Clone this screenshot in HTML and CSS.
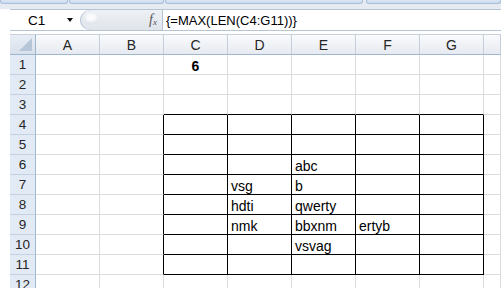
FILE: index.html
```html
<!DOCTYPE html>
<html lang="en">
  <head>
    <meta charset="UTF-8" />
    <title>Array formula – MAX(LEN())</title>
    <link rel="stylesheet" href="styles.css">
  </head>
  <body>
    <div class="ribbon">
      <div class="ribbon_Grp ribbon_Grp-a"></div>
      <div class="ribbon_Grp ribbon_Grp-b"></div>
      <div class="ribbon_Grp ribbon_Grp-c"></div>
      <div class="ribbon_Grp ribbon_Grp-d"></div>
    </div>
    <div class="fbar">
      <div class="fbar_Name">
        <span class="fbar_Ref">C1</span>
        <span class="fbar_Drop"></span>
      </div>
      <div class="fbar_Handle">
        <span class="fbar_Knob"></span>
        <span class="fbar_Fx"><i>f</i><sub>x</sub></span>
      </div>
      <div class="fbar_Formula">{=MAX(LEN(C4:G11))}</div>
    </div>
    <div class="sheet">
      <div class="row row-head">
        <div class="corner"></div>
        <div class="ch">A</div><div class="ch">B</div><div class="ch">C</div><div class="ch">D</div>
        <div class="ch">E</div><div class="ch">F</div><div class="ch">G</div><div class="ch ch-last"></div>
      </div>
      <div class="row">
        <div class="rh">1</div>
        <div class="c"></div><div class="c"></div><div class="c c-ctr c-bold">6</div><div class="c"></div>
        <div class="c"></div><div class="c"></div><div class="c"></div><div class="c"></div>
      </div>
      <div class="row">
        <div class="rh">2</div>
        <div class="c"></div><div class="c"></div><div class="c"></div><div class="c"></div>
        <div class="c"></div><div class="c"></div><div class="c"></div><div class="c"></div>
      </div>
      <div class="row">
        <div class="rh">3</div>
        <div class="c"></div><div class="c"></div><div class="c tp"></div><div class="c tp"></div>
        <div class="c tp"></div><div class="c tp"></div><div class="c tp"></div><div class="c"></div>
      </div>
      <div class="row">
        <div class="rh">4</div>
        <div class="c"></div><div class="c lf"></div><div class="c bx"></div><div class="c bx"></div>
        <div class="c bx"></div><div class="c bx"></div><div class="c bx"></div><div class="c"></div>
      </div>
      <div class="row">
        <div class="rh">5</div>
        <div class="c"></div><div class="c lf"></div><div class="c bx"></div><div class="c bx"></div>
        <div class="c bx"></div><div class="c bx"></div><div class="c bx"></div><div class="c"></div>
      </div>
      <div class="row">
        <div class="rh">6</div>
        <div class="c"></div><div class="c lf"></div><div class="c bx"></div><div class="c bx"></div>
        <div class="c bx">abc</div><div class="c bx"></div><div class="c bx"></div><div class="c"></div>
      </div>
      <div class="row">
        <div class="rh">7</div>
        <div class="c"></div><div class="c lf"></div><div class="c bx"></div><div class="c bx">vsg</div>
        <div class="c bx">b</div><div class="c bx"></div><div class="c bx"></div><div class="c"></div>
      </div>
      <div class="row">
        <div class="rh">8</div>
        <div class="c"></div><div class="c lf"></div><div class="c bx"></div><div class="c bx">hdti</div>
        <div class="c bx">qwerty</div><div class="c bx"></div><div class="c bx"></div><div class="c"></div>
      </div>
      <div class="row">
        <div class="rh">9</div>
        <div class="c"></div><div class="c lf"></div><div class="c bx"></div><div class="c bx">nmk</div>
        <div class="c bx">bbxnm</div><div class="c bx">ertyb</div><div class="c bx"></div><div class="c"></div>
      </div>
      <div class="row">
        <div class="rh">10</div>
        <div class="c"></div><div class="c lf"></div><div class="c bx"></div><div class="c bx"></div>
        <div class="c bx">vsvag</div><div class="c bx"></div><div class="c bx"></div><div class="c"></div>
      </div>
      <div class="row">
        <div class="rh">11</div>
        <div class="c"></div><div class="c lf"></div><div class="c bx"></div><div class="c bx"></div>
        <div class="c bx"></div><div class="c bx"></div><div class="c bx"></div><div class="c"></div>
      </div>
      <div class="row">
        <div class="rh">12</div>
        <div class="c"></div><div class="c"></div><div class="c"></div><div class="c"></div>
        <div class="c"></div><div class="c"></div><div class="c"></div><div class="c"></div>
      </div>
    </div>
  </body>
</html>
```

FILE: styles.css
```css
html {
  box-sizing: border-box;
}

*,
*:before,
*:after {
  box-sizing: inherit;
}

body {
  margin: 0;
  height: 288px;
  overflow: hidden;
  background-color: #fff;
  font-family: 'Liberation Sans', Arial, sans-serif;
  color: #000;
}

/* bottom edge of the ribbon */
.ribbon {
  display: flex;
  height: 9px;
  background-color: #e6ebf2;
}

.ribbon_Grp {
  height: 4px;
  background: linear-gradient(#dce7f5, #c9d9ee);
  border: 1px solid #a9bfdb;
  border-top: 0;
  border-radius: 0 0 3px 3px;
}

.ribbon_Grp-a {
  width: 68px;
}

.ribbon_Grp-b {
  width: 95px;
  margin-left: 1px;
}

.ribbon_Grp-c {
  width: 198px;
  margin-left: 1px;
}

.ribbon_Grp-d {
  flex: 1;
  margin-left: 3px;
}

/* name box + formula bar */
.fbar {
  display: flex;
  height: 22px;
  margin-left: 10px;
  border-top: 1px solid #b7c4d6;
  border-bottom: 1px solid #b7c4d6;
  background-color: #fff;
}

.fbar_Name {
  display: flex;
  align-items: center;
  width: 70px;
  padding-left: 18px;
  font-size: 13.5px;
}

.fbar_Ref {
  width: 39px;
}

.fbar_Drop {
  width: 0;
  height: 0;
  border-left: 3.5px solid transparent;
  border-right: 3.5px solid transparent;
  border-top: 4px solid #111;
}

.fbar_Handle {
  position: relative;
  display: flex;
  align-items: center;
  justify-content: flex-end;
  width: 83px;
  padding-right: 5px;
  border-radius: 11px 0 0 11px;
  border-right: 1px solid #b7c4d6;
  background: linear-gradient(#eef1f5, #dfe4eb);
  box-shadow: inset 1px 0 0 #b7c4d6;
}

.fbar_Knob {
  position: absolute;
  left: 5px;
  top: 3px;
  width: 12px;
  height: 9px;
  border-radius: 50%;
  background: radial-gradient(#fff 0, rgba(255, 255, 255, 0.6) 50%, rgba(255, 255, 255, 0) 100%);
}

.fbar_Fx {
  font-family: 'Liberation Serif', serif;
  font-size: 14px;
  color: #555;
}

.fbar_Fx sub {
  font-size: 9px;
  font-style: italic;
  vertical-align: -1px;
}

.fbar_Formula {
  flex: 1;
  display: flex;
  align-items: center;
  padding-left: 3px;
  font-size: 13px;
}

/* the worksheet */
.sheet {
  margin-top: 3px;
  margin-left: 10px;
  border-top: 1px solid #c8d0da;
}

.row {
  display: flex;
  height: 20px;
}

.corner {
  position: relative;
  flex: none;
  width: 26px;
  border-right: 1px solid #9eb6ce;
  border-bottom: 1px solid #9eb6ce;
  background: linear-gradient(#e9eef5, #d8e0eb);
}

.corner:after {
  content: '';
  position: absolute;
  right: 3px;
  bottom: 3px;
  width: 0;
  height: 0;
  border-left: 13px solid transparent;
  border-bottom: 13px solid #b7c5d8;
}

.ch {
  flex: none;
  width: 64px;
  display: flex;
  align-items: center;
  justify-content: center;
  border-right: 1px solid #c5cdd8;
  border-bottom: 1px solid #9eb6ce;
  background: linear-gradient(#f9fafc, #e6eaf0);
  font-size: 14px;
  color: #262626;
}

.ch-last {
  flex: 1;
}

.rh {
  flex: none;
  width: 26px;
  display: flex;
  align-items: center;
  justify-content: center;
  border-right: 1px solid #9eb6ce;
  border-bottom: 1px solid #c5d1e0;
  background-color: #e2eaf5;
  font-size: 13.5px;
  color: #262626;
}

.c {
  flex: none;
  width: 64px;
  display: flex;
  align-items: flex-end;
  padding: 0 3px;
  border-right: 1px solid #dadcdd;
  border-bottom: 1px solid #dadcdd;
  font-size: 14px;
  line-height: 16px;
}

.c:last-child {
  flex: 1;
}

.c-ctr {
  justify-content: center;
}

.c-bold {
  font-weight: 700;
}

/* thin black box round C4:G11 */
.tp {
  border-bottom-color: #000;
}

.lf {
  border-right-color: #000;
}

.bx {
  border-right-color: #000;
  border-bottom-color: #000;
}
```
